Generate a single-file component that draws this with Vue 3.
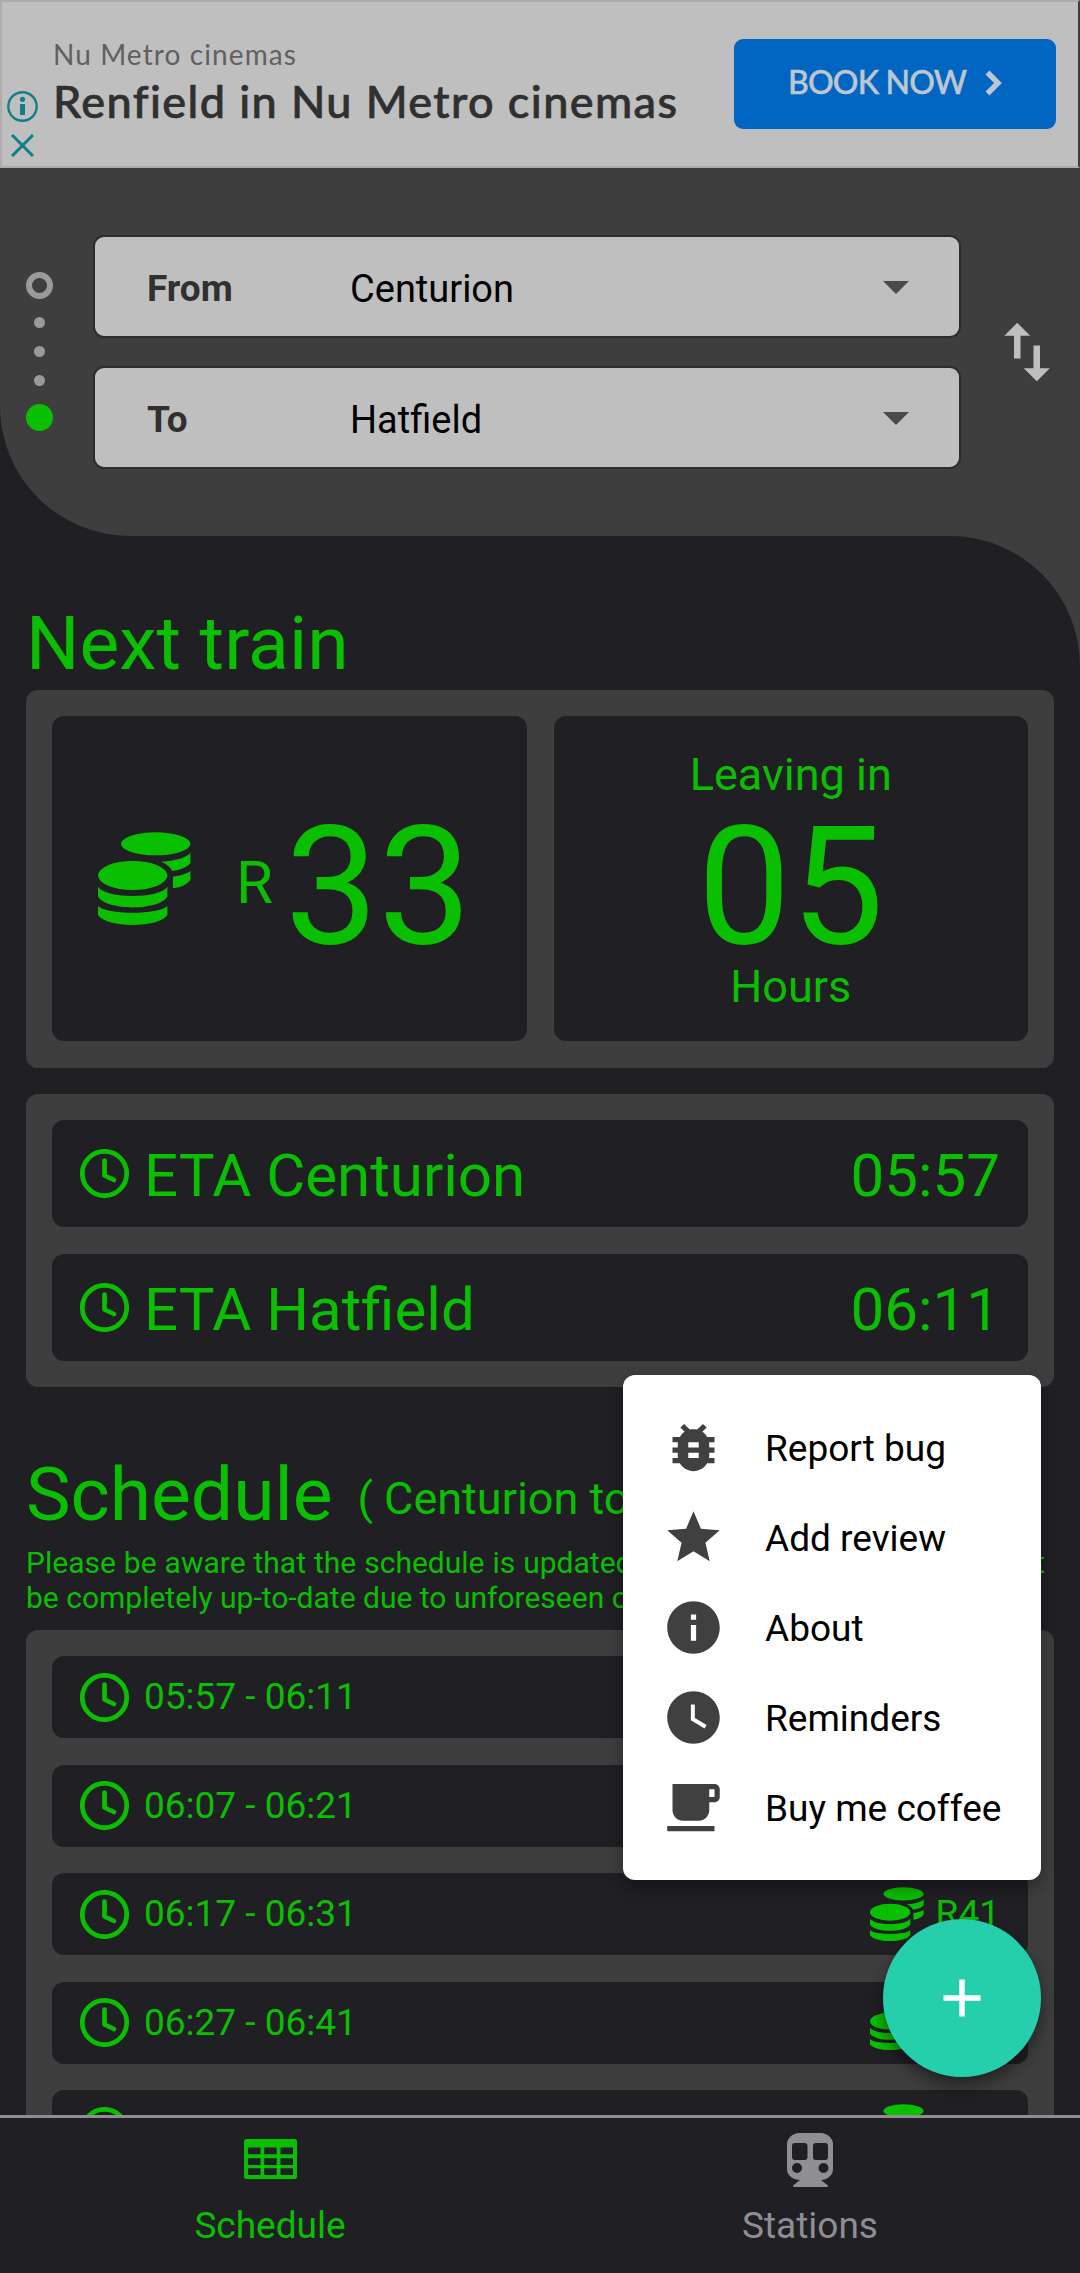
<template>
  <div class="app">
    <section class="ad">
      <div class="ad-choices">
        <svg width="31" height="31" viewBox="0 0 31 31">
          <circle cx="15.5" cy="15.5" r="14.2" fill="none" stroke="currentColor" stroke-width="2.4" />
          <circle cx="15.5" cy="8.3" r="2.6" fill="currentColor" />
          <rect x="13" y="13" width="5" height="11" fill="currentColor" />
        </svg>
        <svg width="23" height="23" viewBox="0 0 23 23">
          <path d="M1 1l21 21M22 1L1 22" stroke="currentColor" stroke-width="3" />
        </svg>
      </div>
      <div class="ad-text">
        <p class="ad-sub">Nu Metro cinemas</p>
        <p class="ad-title">Renfield in Nu Metro cinemas</p>
      </div>
      <button class="ad-button">
        <span>BOOK NOW</span>
        <svg width="17" height="26" viewBox="0 0 17 26">
          <path d="M2.5 2.5L13 13 2.5 23.5" fill="none" stroke="currentColor" stroke-width="5.4" />
        </svg>
      </button>
    </section>

    <main class="content">
      <header class="route">
        <div class="track">
          <span class="ring"></span>
          <span class="dot"></span>
          <span class="dot"></span>
          <span class="dot"></span>
          <span class="end"></span>
        </div>
        <div class="selects">
          <div v-for="field in route" :key="field.label" class="select">
            <b>{{ field.label }}</b>
            <span>{{ field.station }}</span>
            <i class="caret"></i>
          </div>
        </div>
        <svg class="swap" viewBox="0 0 24 24" @click="swapStations">
          <path d="M16 17.01V10h-2v7.01h-3L15 21l4-3.99h-3zM9 3L5 6.99h3V14h2V6.99h3L9 3z" />
        </svg>
      </header>

      <div class="page-wrap">
        <div class="page">
          <h2>Next train</h2>
          <div class="card next">
            <div class="box price">
              <svg class="coins" viewBox="0 0 93 93"><path :d="coins" /></svg>
              <span class="currency">R</span>
              <span class="big">33</span>
            </div>
            <div class="box leaving">
              <span>Leaving in</span>
              <span class="big">05</span>
              <span>Hours</span>
            </div>
          </div>

          <div class="card eta">
            <div v-for="eta in etas" :key="eta.station" class="box row">
              <svg class="clock" viewBox="0 0 49 49">
                <circle cx="24.5" cy="24.5" r="22.2" />
                <path d="M24.5 11.5V26.5L34 31" />
              </svg>
              <span>ETA {{ eta.station }}</span>
              <span class="end-text">{{ eta.time }}</span>
            </div>
          </div>

          <div class="heading">
            <h2>Schedule</h2>
            <span>( Centurion to Hatfield )</span>
          </div>
          <div class="notice">
            <p class="full-line">Please be aware that the schedule is updated regularly, however, it might not</p>
            <p>be completely up-to-date due to unforeseen circumstances.</p>
          </div>

          <div class="card schedule">
            <div v-for="trip in trips" :key="trip.time" class="box row">
              <svg class="clock" viewBox="0 0 49 49">
                <circle cx="24.5" cy="24.5" r="22.2" />
                <path d="M24.5 11.5V26.5L34 31" />
              </svg>
              <span>{{ trip.time }}</span>
              <svg class="coins small" viewBox="0 0 93 93"><path :d="coins" /></svg>
              <span class="fare">{{ trip.fare }}</span>
            </div>
          </div>
        </div>
      </div>
    </main>

    <nav class="tabs">
      <a class="tab active">
        <svg width="53" height="54" viewBox="0 -6 53 54">
          <path
            fill-rule="evenodd"
            d="M2.5 0h48A2.5 2.5 0 0 1 53 2.5v35A2.5 2.5 0 0 1 50.5 40h-48A2.5 2.5 0 0 1 0 37.5v-35A2.5 2.5 0 0 1 2.5 0z
            M4 8.5v6.7h12.5V8.5zM20.2 8.5v6.7h12.5V8.5zM36.5 8.5v6.7H49V8.5z
            M4 19.2v6.7h12.5v-6.7zM20.2 19.2v6.7h12.5v-6.7zM36.5 19.2v6.7H49v-6.7z
            M4 29.3V36h12.5v-6.7zM20.2 29.3V36h12.5v-6.7zM36.5 29.3V36H49v-6.7z"
          />
        </svg>
        <span>Schedule</span>
      </a>
      <a class="tab">
        <svg width="46" height="54" viewBox="0 0 46 54">
          <path
            fill-rule="evenodd"
            d="M12 0h22c6 0 12 5 12 11v25c0 6-5 10.5-12 11l7 5.5-.5 1.5h-34L6 52.5 13 47C5 46.5 0 42 0 36V11C0 5 6 0 12 0z
            M8 10a3 3 0 0 0-3 3v11a3 3 0 0 0 3 3h9.5a3 3 0 0 0 3-3V13a3 3 0 0 0-3-3z
            M29 10a3 3 0 0 0-3 3v11a3 3 0 0 0 3 3h9a3 3 0 0 0 3-3V13a3 3 0 0 0-3-3z
            M10 30a5 5 0 1 0 0 10a5 5 0 0 0 0-10zM36.5 30a5 5 0 1 0 0 10a5 5 0 0 0 0-10z"
          />
        </svg>
        <span>Stations</span>
      </a>
    </nav>

    <ul v-if="menuOpen" class="menu">
      <li v-for="item in menu" :key="item.label">
        <svg viewBox="0 0 24 24"><path :d="item.icon" /></svg>
        <span>{{ item.label }}</span>
      </li>
    </ul>

    <button class="fab" @click="menuOpen = !menuOpen">
      <svg width="38" height="38" viewBox="0 0 38 38">
        <path d="M19 .5v37M.5 19h37" stroke="#fff" stroke-width="5.4" />
      </svg>
    </button>
  </div>
</template>

<script setup>
import { ref } from 'vue'

const menuOpen = ref(true)

const route = ref([
  { label: 'From', station: 'Centurion' },
  { label: 'To', station: 'Hatfield' },
])

const swapStations = () => {
  const [from, to] = route.value
  const station = from.station
  from.station = to.station
  to.station = station
}

const etas = [
  { station: 'Centurion', time: '05:57' },
  { station: 'Hatfield', time: '06:11' },
]

const trips = [
  { time: '05:57 - 06:11', fare: 'R33' },
  { time: '06:07 - 06:21', fare: 'R41' },
  { time: '06:17 - 06:31', fare: 'R41' },
  { time: '06:27 - 06:41', fare: 'R41' },
  { time: '06:37 - 06:51', fare: 'R41' },
]

// two stacks of coins, the back one partly hidden
const coins = [
  'M23 11.8a34.7 11.5 0 0 1 69.4 0a34.7 11.5 0 0 1 -69.4 0z',
  'M0 43.5a34.7 14.5 0 0 1 69.4 0a34.7 14.5 0 0 1 -69.4 0z',
  'M0 54.7C8 67 61.4 67 69.4 54.7V64.5C61.4 79 8 79 0 64.5z',
  'M0 74C8 83 61.4 83 69.4 74V83C61.4 96.3 8 96.3 0 83z',
  'M63.2 29.7C77 28.8 88 26 92.4 21V31.3C89 35.5 82 38 74.2 39C72.5 35 68.5 32 63.2 29.7z',
  'M74.9 44.7C82 43.5 89 42 92.4 39V48C89 52.5 83 55.3 74.9 56.3z',
].join('')

const menu = [
  {
    label: 'Report bug',
    icon: 'M20 8h-2.81c-.45-.78-1.07-1.45-1.82-1.96L17 4.41 15.59 3l-2.17 2.17C12.96 5.06 12.49 5 12 5c-.49 0-.96.06-1.41.17L8.41 3 7 4.41l1.62 1.63C7.88 6.55 7.26 7.22 6.81 8H4v2h2.09c-.05.33-.09.66-.09 1v1H4v2h2v1c0 .34.04.67.09 1H4v2h2.81c1.04 1.79 2.97 3 5.19 3s4.15-1.21 5.19-3H20v-2h-2.09c.05-.33.09-.66.09-1v-1h2v-2h-2v-1c0-.34-.04-.67-.09-1H20V8zm-6 8h-4v-2h4v2zm0-4h-4v-2h4v2z',
  },
  {
    label: 'Add review',
    icon: 'M12 17.27L18.18 21l-1.64-7.03L22 9.24l-7.19-.61L12 2 9.19 8.63 2 9.24l5.46 4.73L5.82 21z',
  },
  {
    label: 'About',
    icon: 'M12 2C6.48 2 2 6.48 2 12s4.48 10 10 10 10-4.48 10-10S17.52 2 12 2zm1 15h-2v-6h2v6zm0-8h-2V7h2v2z',
  },
  {
    label: 'Reminders',
    icon: 'M12 2C6.5 2 2 6.5 2 12s4.5 10 10 10 10-4.5 10-10S17.5 2 12 2zm4.2 14.2L11 13V7h1.5v5.2l4.5 2.7-.8 1.3z',
  },
  {
    label: 'Buy me coffee',
    icon: 'M20 3H4v10c0 2.21 1.79 4 4 4h6c2.21 0 4-1.79 4-4v-3h2c1.11 0 2-.9 2-2V5c0-1.11-.89-2-2-2zm0 5h-2V5h2v3zM2 21h18v-2H2v2z',
  },
]
</script>

<style>
body {
  margin: 0;
  background: #201f24;
}
</style>

<style scoped>
* {
  margin: 0;
  padding: 0;
  box-sizing: border-box;
}

.app {
  position: relative;
  width: 1080px;
  height: 2273px;
  display: flex;
  flex-direction: column;
  overflow: hidden;
  background: #201f24;
  color: #0abf00;
  font-family: Roboto, sans-serif;
}

svg {
  display: block;
  flex: none;
  fill: currentColor;
}

button {
  border: none;
  cursor: pointer;
}

.ad {
  height: 168px;
  flex: none;
  display: flex;
  align-items: flex-start;
  background: #bfbfbf;
  border: 2px solid #acacac;
  border-right-color: #3e3e3e;
  font-family: Lato, sans-serif;
}

.ad-choices {
  width: 51px;
  padding: 89px 0 0 5px;
  color: #0e7f8b;
}

.ad-choices svg + svg {
  margin: 12px 0 0 4px;
}

.ad-text {
  flex: 1;
  padding-top: 34px;
  white-space: nowrap;
}

.ad-sub {
  font-size: 28px;
  line-height: 36px;
  letter-spacing: 1.1px;
  color: #606060;
}

.ad-title {
  margin-top: 2px;
  font-size: 45px;
  font-weight: 500;
  line-height: 54px;
  letter-spacing: 1.4px;
  color: #303030;
  -webkit-text-stroke: 0.7px #303030;
}

.ad-button {
  display: flex;
  align-items: center;
  justify-content: space-between;
  width: 322px;
  height: 90px;
  margin: 37px 22px 0 0;
  padding: 0 54px;
  border-radius: 9px;
  background: #0066c2;
  color: #bfc6cf;
  font-family: Lato, sans-serif;
  font-size: 32px;
  font-weight: 500;
  letter-spacing: -0.8px;
  white-space: nowrap;
  -webkit-text-stroke: 0.5px #bfc6cf;
}

.ad-button span {
  padding-bottom: 5px;
}

.ad-button svg {
  margin-bottom: 2px;
}

.content {
  flex: 1;
  min-height: 0;
  overflow: hidden;
  background: #201f24;
}

.route {
  display: flex;
  align-items: center;
  height: 368px;
  padding: 0 0 0 26px;
  background: #3e3e3e;
  border-bottom-left-radius: 130px;
}

.track {
  display: flex;
  flex-direction: column;
  align-items: center;
  width: 27px;
  padding-bottom: 1px;
}

.ring {
  width: 27px;
  height: 27px;
  margin-bottom: 18px;
  border: 6px solid #9a9a9b;
  border-radius: 50%;
}

.dot {
  width: 11px;
  height: 11px;
  margin-bottom: 18px;
  border-radius: 50%;
  background: #9a9a9b;
}

.end {
  width: 27px;
  height: 27px;
  border-radius: 50%;
  background: #0abf00;
}

.selects {
  display: flex;
  flex-direction: column;
  gap: 28px;
  width: 868px;
  margin-left: 40px;
}

.select {
  display: flex;
  align-items: center;
  height: 103px;
  padding: 2px 50px 0 52px;
  background: #bfbfbf;
  border: 2px solid #2d2d2d;
  border-radius: 11px;
  color: #000;
  font-size: 37px;
}

.select b {
  width: 203px;
  padding-top: 2px;
  color: #303030;
}

.select span {
  padding-top: 2px;
  font-size: 38px;
}

.caret {
  margin-left: auto;
  border: 13px solid transparent;
  border-top-color: #4a4a4a;
  border-bottom: none;
}

.swap {
  width: 78px;
  height: 78px;
  margin: 0 0 1px 27px;
  color: #bfbfbf;
}

/* shows through the rounded corner of the page below the header */
.page-wrap {
  background: linear-gradient(to right, #201f24 50%, #3e3e3e 50%);
}

.page {
  padding: 63px 26px 0;
  background: #201f24;
  border-top-right-radius: 130px;
}

h2 {
  font-size: 75px;
  font-weight: 400;
  line-height: 88px;
}

.card {
  padding: 26px;
  background: #3e3e3e;
  border-radius: 12px;
}

.box {
  background: #201f24;
  border-radius: 12px;
}

.next {
  display: grid;
  grid-template-columns: 1fr 1fr;
  gap: 27px;
  height: 378px;
  margin-top: 3px;
  padding-bottom: 27px;
}

.price {
  display: flex;
  align-items: center;
  padding-left: 46px;
}

.coins {
  width: 93px;
  height: 93px;
}

.currency {
  margin-left: 45px;
  padding-top: 8px;
  font-size: 60px;
}

.big {
  font-size: 166px;
  line-height: 146px;
}

.price .big {
  margin-left: 12px;
  padding-top: 17px;
}

.leaving {
  display: flex;
  flex-direction: column;
  align-items: center;
  padding-top: 32px;
  font-size: 45px;
  line-height: 53px;
}

.leaving .big {
  margin-top: 13px;
}

.eta,
.schedule {
  display: flex;
  flex-direction: column;
  gap: 27px;
}

.eta {
  margin-top: 26px;
}

.row {
  display: flex;
  align-items: center;
  gap: 15px;
  padding: 0 28px;
}

.eta .row {
  height: 107px;
  font-size: 60px;
}

.eta .row span {
  padding-top: 4px;
}

.clock {
  width: 49px;
  height: 49px;
  fill: none;
  stroke: currentColor;
  stroke-width: 4.7;
  stroke-linecap: round;
  stroke-linejoin: round;
}

.end-text {
  margin-left: auto;
}

.heading {
  display: flex;
  align-items: center;
  margin-top: 63px;
  white-space: nowrap;
}

.heading span {
  margin-left: 25px;
  padding-top: 8px;
  font-size: 45px;
}

.notice {
  margin: 7px 0 15px;
  font-size: 30px;
  line-height: 35px;
  white-space: nowrap;
}

.full-line {
  width: 1019px;
  white-space: normal;
  text-align-last: justify;
}

.schedule {
  gap: 26.5px;
}

.schedule .row {
  height: 82px;
  font-size: 37px;
}

.schedule .row span {
  padding-bottom: 1px;
}

.coins.small {
  width: 54px;
  height: 54px;
  margin-left: auto;
}

.fare {
  margin-left: -3px;
}

.tabs {
  display: flex;
  flex: none;
  height: 158px;
  border-top: 3px solid #8e8e93;
  background: #201f24;
}

.tab {
  flex: 1;
  display: flex;
  flex-direction: column;
  align-items: center;
  padding-top: 15px;
  color: #8e8e93;
  font-size: 37px;
  line-height: 44px;
}

.tab span {
  margin-top: 17px;
}

.tab.active {
  color: #0abf00;
}

.menu {
  position: absolute;
  right: 39px;
  top: 1375px;
  width: 418px;
  height: 505px;
  padding: 27px 0 0 39px;
  list-style: none;
  background: #fff;
  border-radius: 12px;
  box-shadow: 0 8px 16px rgba(0, 0, 0, 0.35);
  color: #000;
  font-size: 37px;
}

.menu li {
  display: flex;
  align-items: center;
  gap: 40px;
  height: 90px;
  white-space: nowrap;
}

.menu span {
  padding-top: 3px;
}

.menu svg {
  width: 63px;
  height: 63px;
  color: #404040;
}

.fab {
  position: absolute;
  right: 39px;
  top: 1919px;
  display: flex;
  align-items: center;
  justify-content: center;
  width: 158px;
  height: 158px;
  border-radius: 50%;
  background: #26cfac;
  box-shadow: 0 8px 16px rgba(0, 0, 0, 0.45);
}
</style>
